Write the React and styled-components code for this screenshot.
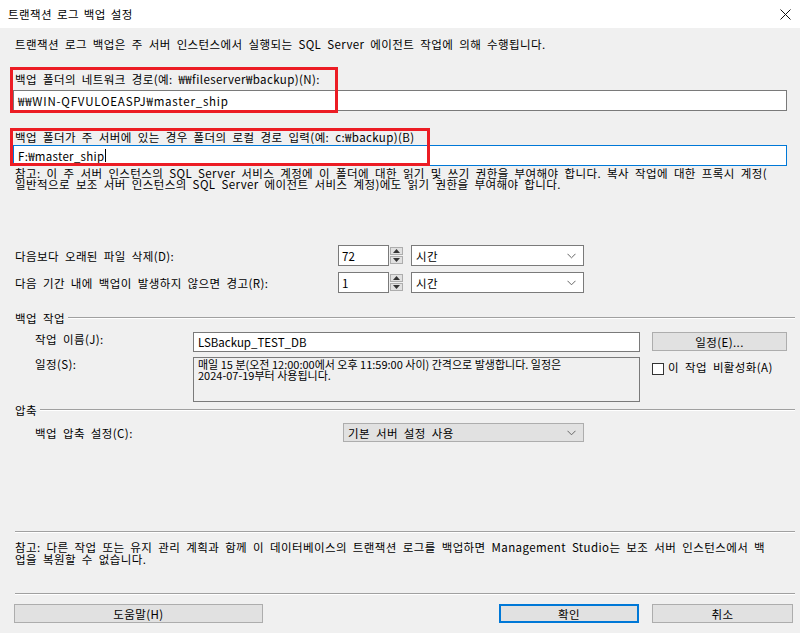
import React from "react";
import styled, { createGlobalStyle } from "styled-components";

const GlobalStyle = createGlobalStyle`
  html, body {
    margin: 0;
    padding: 0;
    background: #f0f0f0;
  }
  * {
    box-sizing: border-box;
  }
`;

const FONT = `"Noto Sans CJK KR", "Noto Sans", sans-serif`;

const Window = styled.div`
  width: 800px;
  height: 633px;
  overflow: hidden;
  display: flex;
  flex-direction: column;
  background: #f0f0f0;
  font-family: ${FONT};
  font-size: 11.5px;
  letter-spacing: 0.4px;
  word-spacing: 3px;
  color: #000;
`;

const TitleBar = styled.div`
  height: 28px;
  flex: none;
  background: #fff;
  display: flex;
  align-items: center;
  justify-content: space-between;
  padding: 0 8px 0 8px;
`;

const Title = styled.span`
  font-size: 11.5px;
  line-height: 14px;
  word-spacing: 2px;
`;

const CloseButton = styled.div`
  width: 14px;
  height: 14px;
  display: flex;
  align-items: center;
  justify-content: center;
`;

const Body = styled.div`
  flex: 1;
  display: flex;
  flex-direction: column;
  padding: 0 13px 0 13px;
`;

const Text = styled.div`
  padding-left: ${(p) => p.$indent ?? 2}px;
  margin-top: ${(p) => p.$top ?? 0}px;
  line-height: ${(p) => p.$lh ?? 14}px;
  white-space: pre;
`;

const Block = styled.div`
  position: relative;
  margin-top: ${(p) => p.$top}px;
  padding-top: ${(p) => p.$pad}px;
`;

const Highlight = styled.div`
  position: absolute;
  left: -3px;
  top: 0;
  width: ${(p) => p.$w}px;
  height: ${(p) => p.$h}px;
  border: 3px solid #ec1c24;
  pointer-events: none;
`;

const TextInput = styled.div`
  height: ${(p) => p.$h ?? 21}px;
  width: ${(p) => (p.$w ? `${p.$w}px` : "100%")};
  margin-top: ${(p) => p.$top ?? 0}px;
  background: #fff;
  border: 1px solid ${(p) => (p.$focused ? "#0078d7" : "#7a7a7a")};
  padding: 0 4px;
  display: flex;
  align-items: center;
  font-size: 11.5px;
  letter-spacing: ${(p) => p.$ls ?? 0}px;
  word-spacing: 0;
  white-space: pre;
`;

const Caret = styled.span`
  display: inline-block;
  width: 1px;
  height: 13px;
  background: #000;
  margin-left: 1px;
`;

const OptionRow = styled.div`
  display: grid;
  grid-template-columns: 325px 51px 14px 173px;
  align-items: center;
  height: 21px;
  margin-top: ${(p) => p.$top}px;
`;

const SpinInput = styled.div`
  height: 21px;
  background: #fff;
  border: 1px solid #7a7a7a;
  padding: 0 3px;
  display: flex;
  align-items: center;
  font-size: 11.5px;
  letter-spacing: 0;
`;

const SpinButtons = styled.div`
  display: flex;
  flex-direction: column;
  gap: 1px;
  margin-left: 1px;
  height: 21px;
  justify-content: center;
`;

const SpinButton = styled.div`
  width: 13px;
  height: 8px;
  background: #e1e1e1;
  border: 1px solid #adadad;
  display: flex;
  align-items: center;
  justify-content: center;
`;

const Combo = styled.div`
  height: ${(p) => p.$h ?? 21}px;
  width: ${(p) => p.$w}px;
  margin-left: ${(p) => p.$left ?? 0}px;
  background: ${(p) => (p.$flat ? "#e1e1e1" : "#fff")};
  border: 1px solid ${(p) => (p.$flat ? "#adadad" : "#7a7a7a")};
  padding: 0 7px 0 4px;
  display: flex;
  align-items: center;
  justify-content: space-between;
  font-size: 11.5px;
`;

const GroupHeader = styled.div`
  display: flex;
  align-items: center;
  height: 16px;
  margin-top: ${(p) => p.$top}px;
  margin-right: -8px;
  padding-left: 2px;
  gap: 3px;
`;

const Rule = styled.div`
  flex: 1;
  height: 2px;
  border-top: 1px solid #a0a0a0;
  border-bottom: 1px solid #fff;
`;

const JobRow = styled.div`
  display: grid;
  grid-template-columns: 180px 447px 12px auto;
  align-items: start;
  margin-top: ${(p) => p.$top}px;
`;

const RowLabel = styled.div`
  padding-left: 22px;
  line-height: 14px;
  padding-top: ${(p) => p.$pad ?? 0}px;
`;

const ScheduleBox = styled.div`
  height: 45px;
  border: 1px solid #7a7a7a;
  background: #f0f0f0;
  padding: 1px 4px;
  line-height: 11px;
  font-size: 11px;
  letter-spacing: 0;
  word-spacing: 0;
  white-space: pre;
`;

const Button = styled.div`
  height: ${(p) => p.$h ?? 19}px;
  width: ${(p) => p.$w}px;
  background: #e1e1e1;
  border: ${(p) => (p.$primary ? "2px solid #0078d7" : "1px solid #adadad")};
  display: flex;
  align-items: center;
  justify-content: center;
  font-size: 11.5px;
`;

const CheckRow = styled.div`
  display: flex;
  align-items: center;
  gap: 4px;
  padding-top: 2px;
`;

const CheckBox = styled.div`
  width: 12px;
  height: 12px;
  margin-top: 4px;
  background: #fff;
  border: 1px solid #333;
`;

const CompressRow = styled.div`
  display: grid;
  grid-template-columns: 330px auto;
  align-items: center;
  height: 19px;
  margin-top: ${(p) => p.$top}px;
`;

const Separator = styled.div`
  height: 2px;
  margin: ${(p) => p.$top}px -8px 0 2px;
  border-top: 1px solid #a0a0a0;
  border-bottom: 1px solid #fff;
`;

const ButtonRow = styled.div`
  display: flex;
  align-items: center;
  margin: ${(p) => p.$top}px -6px 0 1px;
`;

const RightButtons = styled.div`
  margin-left: auto;
  display: flex;
  gap: 13px;
`;

const Chevron = () => (
  <svg width="9" height="6" viewBox="0 0 9 6">
    <path d="M0.5 0.8 L4.5 4.8 L8.5 0.8" fill="none" stroke="#666" strokeWidth="1" />
  </svg>
);

const Arrow = ({ up }) => (
  <svg width="7" height="4" viewBox="0 0 7 4">
    <path d={up ? "M0 4 L3.5 0 L7 4 Z" : "M0 0 L3.5 4 L7 0 Z"} fill="#333" />
  </svg>
);

const Spinner = ({ value }) => (
  <>
    <SpinInput>{value}</SpinInput>
    <SpinButtons>
      <SpinButton>
        <Arrow up />
      </SpinButton>
      <SpinButton>
        <Arrow />
      </SpinButton>
    </SpinButtons>
  </>
);

export default function App() {
  return (
    <>
      <GlobalStyle />
      <Window>
        <TitleBar>
          <Title>트랜잭션 로그 백업 설정</Title>
          <CloseButton>
            <svg width="11" height="11" viewBox="0 0 11 11">
              <path d="M0.5 0.5 L10.5 10.5 M10.5 0.5 L0.5 10.5" stroke="#111" strokeWidth="1" />
            </svg>
          </CloseButton>
        </TitleBar>
        <Body>
          <Text $top={9}>
            트랜잭션 로그 백업은 주 서버 인스턴스에서 실행되는 SQL Server 에이전트 작업에 의해 수행됩니다.
          </Text>

          <Block $top={16} $pad={4}>
            <Text $lh={16}>백업 폴더의 네트워크 경로(예: ₩₩fileserver₩backup)(N):</Text>
            <TextInput $top={3} $ls={0.8}>₩₩WIN-QFVULOEASPJ₩master_ship</TextInput>
            <Highlight $w={328} $h={46} />
          </Block>

          <Block $top={17} $pad={1}>
            <Text $lh={16}>백업 폴더가 주 서버에 있는 경우 폴더의 로컬 경로 입력(예: c:₩backup)(B)</Text>
            <TextInput $focused $h={21} $ls={0.3}>
              F:₩master_ship
              <Caret />
            </TextInput>
            <Highlight $w={420} $h={38} />
          </Block>

          <Text $top={2} $lh={11}>
            {"참고: 이 주 서버 인스턴스의 SQL Server 서비스 계정에 이 폴더에 대한 읽기 및 쓰기 권한을 부여해야 합니다. 복사 작업에 대한 프록시 계정(\n일반적으로 보조 서버 인스턴스의 SQL Server 에이전트 서비스 계정)에도 읽기 권한을 부여해야 합니다."}
          </Text>

          <OptionRow $top={55}>
            <Text>다음보다 오래된 파일 삭제(D):</Text>
            <Spinner value="72" />
            <Combo $w={173} $left={8}>
              <span>시간</span>
              <Chevron />
            </Combo>
          </OptionRow>
          <OptionRow $top={6}>
            <Text>다음 기간 내에 백업이 발생하지 않으면 경고(R):</Text>
            <Spinner value="1" />
            <Combo $w={173} $left={8}>
              <span>시간</span>
              <Chevron />
            </Combo>
          </OptionRow>

          <GroupHeader $top={17}>
            <span>백업 작업</span>
            <Rule />
          </GroupHeader>

          <JobRow $top={6}>
            <RowLabel>작업 이름(J):</RowLabel>
            <TextInput $h={20}>LSBackup_TEST_DB</TextInput>
            <span />
            <Button $w={135} $h={19}>일정(E)...</Button>
          </JobRow>
          <JobRow $top={5}>
            <RowLabel>일정(S):</RowLabel>
            <ScheduleBox>
              {"매일 15 분(오전 12:00:00에서 오후 11:59:00 사이) 간격으로 발생합니다. 일정은\n2024-07-19부터 사용됩니다."}
            </ScheduleBox>
            <span />
            <CheckRow>
              <CheckBox />
              <span>이 작업 비활성화(A)</span>
            </CheckRow>
          </JobRow>

          <GroupHeader $top={0}>
            <span>압축</span>
            <Rule />
          </GroupHeader>

          <CompressRow $top={5}>
            <RowLabel>백업 압축 설정(C):</RowLabel>
            <Combo $w={241} $h={19} $flat>
              <span>기본 서버 설정 사용</span>
              <Chevron />
            </Combo>
          </CompressRow>

          <Separator $top={89} />
          <Text $top={8} $lh={12}>
            {"참고: 다른 작업 또는 유지 관리 계획과 함께 이 데이터베이스의 트랜잭션 로그를 백업하면 Management Studio는 보조 서버 인스턴스에서 백\n업을 복원할 수 없습니다."}
          </Text>
          <Separator $top={28} />

          <ButtonRow $top={9}>
            <Button $w={249}>도움말(H)</Button>
            <RightButtons>
              <Button $w={140} $primary>확인</Button>
              <Button $w={141}>취소</Button>
            </RightButtons>
          </ButtonRow>
        </Body>
      </Window>
    </>
  );
}
